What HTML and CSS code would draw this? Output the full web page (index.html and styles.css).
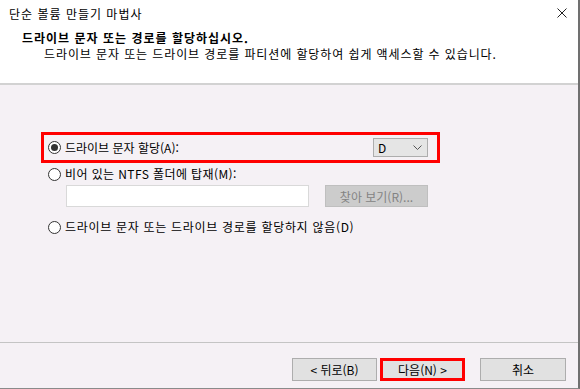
FILE: index.html
```html
<!DOCTYPE html>
<html lang="ko">
  <head>
    <meta charset="UTF-8" />
    <meta name="viewport" content="width=device-width, initial-scale=1.0" />
    <title>단순 볼륨 만들기 마법사</title>
    <link rel="stylesheet" href="styles.css">
  </head>
  <body>
    <div class="wizard">
      <div class="titlebar">
        <span class="title">단순 볼륨 만들기 마법사</span>
        <svg class="close" width="10" height="10" viewBox="0 0 10 10">
          <path d="M0.5 0.5 L9.5 9.5 M9.5 0.5 L0.5 9.5" stroke="#222" stroke-width="1" fill="none" />
        </svg>
      </div>

      <div class="header">
        <h1>드라이브 문자 또는 경로를 할당하십시오.</h1>
        <p>드라이브 문자 또는 드라이브 경로를 파티션에 할당하여 쉽게 액세스할 수 있습니다.</p>
      </div>

      <div class="content">
        <div class="highlight">
          <label class="option">
            <span class="radio checked"></span>
            <span>드라이브 문자 할당(A):</span>
          </label>
          <div class="select">
            <span>D</span>
            <svg width="9" height="5" viewBox="0 0 9 5">
              <path d="M0.5 0.5 L4.5 4.5 L8.5 0.5" stroke="#555" stroke-width="1" fill="none" />
            </svg>
          </div>
        </div>

        <label class="option row mount">
          <span class="radio"></span>
          <span>비어 있는 NTFS 폴더에 탑재(M):</span>
        </label>
        <div class="path-row">
          <div class="path-input"></div>
          <button class="btn disabled">찾아 보기(R)...</button>
        </div>

        <label class="option row last">
          <span class="radio"></span>
          <span>드라이브 문자 또는 드라이브 경로를 할당하지 않음(D)</span>
        </label>
      </div>

      <div class="footer">
        <button class="btn">&lt; 뒤로(B)</button>
        <button class="btn next">다음(N) &gt;</button>
        <button class="btn cancel">취소</button>
      </div>
    </div>
  </body>
</html>
```

FILE: styles.css
```css
body {
  margin: 0;
  font-family: "Noto Sans CJK KR", "Noto Sans", sans-serif;
  font-size: 12px;
  color: #000;
  background: #fff;
}

.wizard {
  width: 578px;
  height: 388px;
  border-right: 2px solid #707070;
  border-bottom: 1px solid #8a8a8a;
  display: flex;
  flex-direction: column;
}

.titlebar {
  height: 26px;
  display: flex;
  align-items: center;
  justify-content: space-between;
  padding: 0 11px 1px 9px;
  background: #fff;
}

.title {
  letter-spacing: 1px;
}

.header {
  height: 58px;
  background: #fff;
  border-bottom: 2px solid #d2d2d2;
  padding: 3px 0 0 22px;
  box-sizing: border-box;
}

.header h1 {
  margin: 0;
  font-size: 12px;
  font-weight: bold;
  line-height: 16px;
  letter-spacing: 1px;
}

.header p {
  margin: 0 0 0 22px;
  line-height: 15px;
  letter-spacing: 0.9px;
}

.content {
  flex: 1;
  background: #f5f1f5;
  padding: 47px 0 0 41px;
}

.highlight {
  width: 380px;
  height: 25px;
  border: 3px solid #f00;
  display: flex;
  align-items: center;
  justify-content: space-between;
  padding: 0 9px 0 4px;
}

.option {
  display: flex;
  align-items: center;
  gap: 4px;
  line-height: 16px;
}

.row {
  margin: 3px 0 0 7px;
}

.row.mount {
  letter-spacing: 0.4px;
}

.row.last {
  margin-top: 12px;
  letter-spacing: 0.7px;
}

.radio {
  width: 11px;
  height: 11px;
  border: 1px solid #333;
  border-radius: 50%;
  background: #fff;
  display: flex;
  align-items: center;
  justify-content: center;
}

.radio.checked::after {
  content: "";
  width: 7px;
  height: 7px;
  border-radius: 50%;
  background: #333;
}

.select {
  width: 44px;
  height: 17px;
  border: 1px solid #adadad;
  background: #e5e5e5;
  display: flex;
  align-items: center;
  justify-content: space-between;
  padding: 0 5px 0 4px;
}

.path-row {
  display: flex;
  gap: 16px;
  margin: 3px 0 0 25px;
}

.path-input {
  width: 241px;
  height: 20px;
  border: 1px solid #d9d9d9;
  background: #fff;
}

.btn {
  font-family: inherit;
  font-size: 12px;
  color: #000;
  background: #e1e1e1;
  border: 1px solid #adadad;
  padding: 0;
  height: 23px;
  width: 85px;
}

.btn.disabled {
  width: 103px;
  height: 22px;
  background: #cccccc;
  border-color: #bfbfbf;
  color: #838383;
}

.footer {
  height: 46px;
  border-top: 1px solid #c4c4c4;
  background: #f5f1f5;
  display: flex;
  align-items: flex-start;
  padding: 15px 0 0 292px;
  box-sizing: border-box;
}

.next {
  margin-left: 3px;
  border: 3px solid #f00;
}

.cancel {
  margin-left: 15px;
  width: 86px;
}
```
